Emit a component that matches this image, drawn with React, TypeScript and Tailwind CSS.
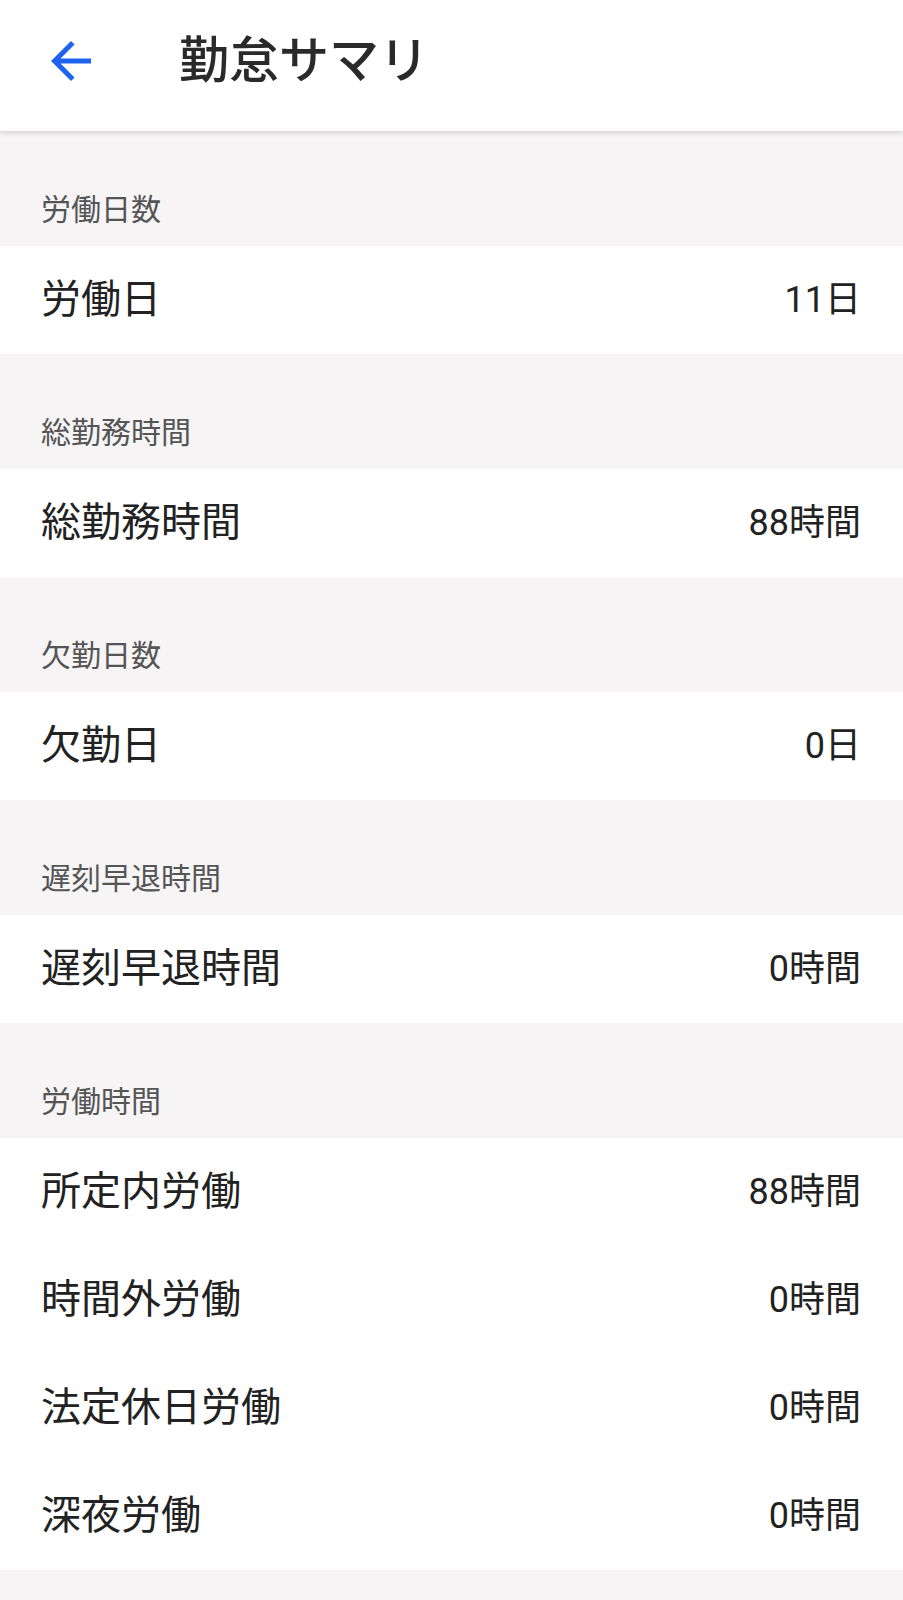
// 勤怠サマリ screen
const font = { fontFamily: "Roboto, 'Noto Sans CJK JP', sans-serif" };

type Row = { label: string; value: string };
type Section = { title: string; rows: Row[] };

const sections: Section[] = [
  { title: '労働日数', rows: [{ label: '労働日', value: '11日' }] },
  { title: '総勤務時間', rows: [{ label: '総勤務時間', value: '88時間' }] },
  { title: '欠勤日数', rows: [{ label: '欠勤日', value: '0日' }] },
  { title: '遅刻早退時間', rows: [{ label: '遅刻早退時間', value: '0時間' }] },
  {
    title: '労働時間',
    rows: [
      { label: '所定内労働', value: '88時間' },
      { label: '時間外労働', value: '0時間' },
      { label: '法定休日労働', value: '0時間' },
      { label: '深夜労働', value: '0時間' },
    ],
  },
];

function BackArrow() {
  return (
    <svg width="60" height="60" viewBox="0 0 24 24" className="shrink-0">
      <path
        fill="#1d63ed"
        d="M20 11H7.83l5.59-5.59L12 4l-8 8 8 8 1.41-1.41L7.83 13H20v-2z"
      />
    </svg>
  );
}

export default function App() {
  return (
    <div className="min-h-screen w-full bg-[#f6f4f5] text-[#222222]" style={font}>
      <header className="relative z-10 flex h-[131px] items-center bg-white pb-[9px] shadow-[0_2px_5px_rgba(0,0,0,0.14)]">
        <div className="ml-[41px] flex items-center">
          <BackArrow />
        </div>
        <h1 className="ml-[78px] text-[50px] font-medium leading-none text-[#2a2a2a]">
          勤怠サマリ
        </h1>
      </header>

      {sections.map((s) => (
        <section key={s.title}>
          <div className="flex h-[115px] items-end pb-[14px] pl-[41px]">
            <p className="text-[30px] leading-[45px] text-[#555555]">{s.title}</p>
          </div>
          <div className="bg-white">
            {s.rows.map((r) => (
              <div
                key={r.label}
                className="flex h-[108px] items-center justify-between pl-[41px] pr-[42px]"
              >
                <span className="text-[40px] leading-none">{r.label}</span>
                <span className="text-[36px] leading-none">{r.value}</span>
              </div>
            ))}
          </div>
        </section>
      ))}
      <div className="h-[40px]" />
    </div>
  );
}
